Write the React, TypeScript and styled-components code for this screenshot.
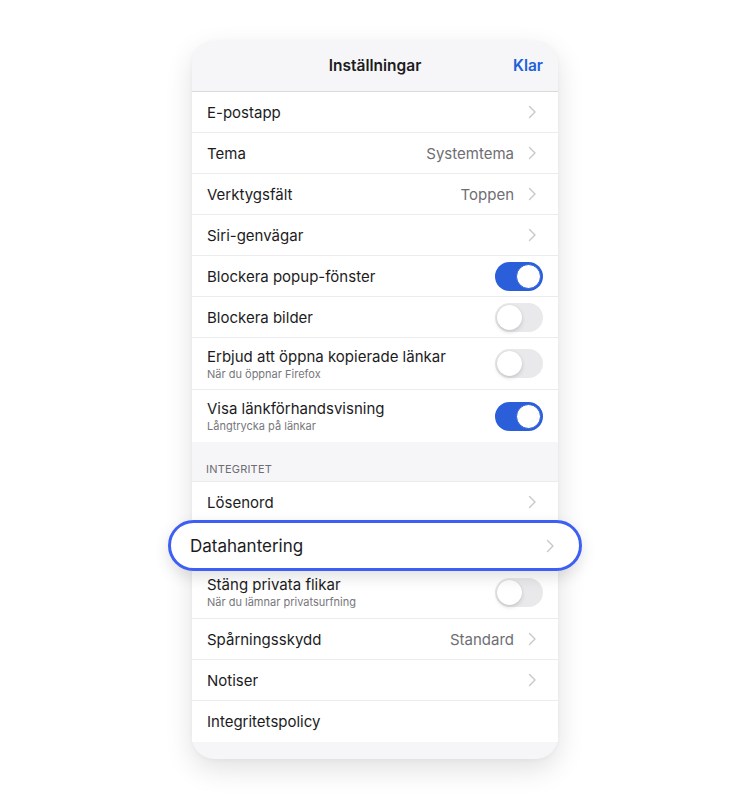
import React from "react";
import styled, { createGlobalStyle } from "styled-components";

const GlobalStyle = createGlobalStyle`
  html, body {
    margin: 0;
    padding: 0;
    background: #ffffff;
  }
  body {
    font-family: Inter, "Liberation Sans", Arial, sans-serif;
    -webkit-font-smoothing: antialiased;
  }
`;

const Page = styled.div`
  width: 750px;
  height: 800px;
  display: flex;
  justify-content: center;
  padding-top: 41px;
  box-sizing: border-box;
`;

const Card = styled.div`
  width: 366px;
  height: 718px;
  border-radius: 22px;
  background: #f6f6f8;
  box-shadow: 0 10px 28px rgba(0, 0, 0, 0.12), 0 1px 4px rgba(0, 0, 0, 0.04);
  display: flex;
  flex-direction: column;
`;

const Header = styled.div`
  height: 50px;
  flex-shrink: 0;
  display: flex;
  align-items: center;
  justify-content: center;
  position: relative;
  border-bottom: 1px solid #d9d9dd;
  border-radius: 22px 22px 0 0;
`;

const Title = styled.div`
  font-size: 15.5px;
  font-weight: 600;
  color: #1c1c1e;
  margin-top: -2px;
`;

const Done = styled.button`
  position: absolute;
  right: 15px;
  top: 50%;
  transform: translateY(-55%);
  border: none;
  background: none;
  padding: 0;
  font-family: inherit;
  font-size: 15.5px;
  font-weight: 600;
  color: #2060d8;
`;

const Group = styled.div`
  background: #ffffff;
  display: flex;
  flex-direction: column;
`;

const Row = styled.div<{ $height: number; $last?: boolean }>`
  height: ${(p) => p.$height}px;
  box-sizing: border-box;
  padding: 0 15px;
  display: flex;
  align-items: center;
  position: relative;
  border-bottom: ${(p) => (p.$last ? "none" : "1px solid #ececef")};
`;

const Texts = styled.div`
  flex: 1;
  display: flex;
  flex-direction: column;
  gap: 2px;
  min-width: 0;
`;

const Label = styled.div`
  font-size: 15px;
  color: #1c1c1e;
  line-height: 19px;
`;

const Sub = styled.div`
  font-size: 11px;
  color: #77777c;
  line-height: 13px;
`;

const Value = styled.div`
  font-size: 15px;
  color: #6e6e73;
  margin-right: 14px;
`;

const Chevron = styled.svg`
  width: 9px;
  height: 14px;
  flex-shrink: 0;
  margin-right: 6px;
`;

const Toggle = styled.div<{ $on?: boolean }>`
  width: 48px;
  height: 29px;
  border-radius: 15px;
  box-sizing: border-box;
  background: ${(p) => (p.$on ? "#2b5fd9" : "#e9e9eb")};
  position: relative;
  flex-shrink: 0;
`;

const Thumb = styled.div<{ $on?: boolean }>`
  position: absolute;
  top: 2px;
  left: ${(p) => (p.$on ? "21px" : "2px")};
  width: 25px;
  height: 25px;
  border-radius: 50%;
  background: #ffffff;
  box-sizing: border-box;
  border: ${(p) => (p.$on ? "1.5px solid #2b5fd9" : "none")};
  box-shadow: ${(p) => (p.$on ? "none" : "0 2px 4px rgba(0,0,0,0.15), 0 0 1px rgba(0,0,0,0.1)")};
`;

const SectionTitle = styled.div`
  height: 40px;
  box-sizing: border-box;
  padding: 0 14px 5px;
  display: flex;
  align-items: flex-end;
  font-size: 11px;
  color: #6d6d72;
  letter-spacing: 0.2px;
  border-bottom: 1px solid #ececef;
`;

/* the enlarged, outlined row that sits over the list */
const Highlight = styled.div`
  position: absolute;
  left: -24px;
  right: -24px;
  top: -3px;
  bottom: -6px;
  border: 3px solid #3d5ff3;
  border-radius: 26px;
  background: #ffffff;
  box-shadow: 0 6px 16px rgba(0, 0, 0, 0.12);
  display: flex;
  align-items: center;
  padding: 0 18px 0 19px;
  z-index: 2;
`;

const BigLabel = styled.div`
  flex: 1;
  font-size: 17px;
  color: #1c1c1e;
`;

const Footer = styled.div`
  flex: 1;
  border-radius: 0 0 22px 22px;
`;

const Arrow = () => (
  <Chevron viewBox="0 0 9 14">
    <path d="M1.5 1.5 L7 7 L1.5 12.5" fill="none" stroke="#c7c7cc" strokeWidth="1.4" strokeLinecap="round" strokeLinejoin="round" />
  </Chevron>
);

type Item = {
  label: string;
  sub?: string;
  value?: string;
  kind: "nav" | "toggle" | "plain";
  on?: boolean;
  height?: number;
  focused?: boolean;
};

const general: Item[] = [
  { label: "E-postapp", kind: "nav" },
  { label: "Tema", value: "Systemtema", kind: "nav" },
  { label: "Verktygsfält", value: "Toppen", kind: "nav" },
  { label: "Siri-genvägar", kind: "nav" },
  { label: "Blockera popup-fönster", kind: "toggle", on: true },
  { label: "Blockera bilder", kind: "toggle" },
  { label: "Erbjud att öppna kopierade länkar", sub: "När du öppnar Firefox", kind: "toggle" },
  { label: "Visa länkförhandsvisning", sub: "Långtrycka på länkar", kind: "toggle", on: true },
];

const privacy: Item[] = [
  { label: "Lösenord", kind: "nav" },
  { label: "Datahantering", kind: "nav", height: 43, focused: true },
  { label: "Stäng privata flikar", sub: "När du lämnar privatsurfning", kind: "toggle", height: 53 },
  { label: "Spårningsskydd", value: "Standard", kind: "nav" },
  { label: "Notiser", kind: "nav" },
  { label: "Integritetspolicy", kind: "plain" },
];

const SettingRow: React.FC<{ item: Item; last?: boolean }> = ({ item, last }) => (
  <Row $height={item.height ?? (item.sub ? 52 : 41)} $last={last}>
    {item.focused ? (
      <Highlight>
        <BigLabel>{item.label}</BigLabel>
        <Arrow />
      </Highlight>
    ) : (
      <>
        <Texts>
          <Label>{item.label}</Label>
          {item.sub && <Sub>{item.sub}</Sub>}
        </Texts>
        {item.value && <Value>{item.value}</Value>}
        {item.kind === "nav" && <Arrow />}
        {item.kind === "toggle" && (
          <Toggle $on={item.on}>
            <Thumb $on={item.on} />
          </Toggle>
        )}
      </>
    )}
  </Row>
);

const App: React.FC = () => {
  return (
    <>
      <GlobalStyle />
      <Page>
        <Card>
          <Header>
            <Title>Inställningar</Title>
            <Done>Klar</Done>
          </Header>
          <Group>
            {general.map((it, i) => (
              <SettingRow key={it.label} item={it} last={i === general.length - 1} />
            ))}
          </Group>
          <SectionTitle>INTEGRITET</SectionTitle>
          <Group>
            {privacy.map((it, i) => (
              <SettingRow key={it.label} item={it} last={i === privacy.length - 1} />
            ))}
          </Group>
          <Footer />
        </Card>
      </Page>
    </>
  );
};

export default App;
